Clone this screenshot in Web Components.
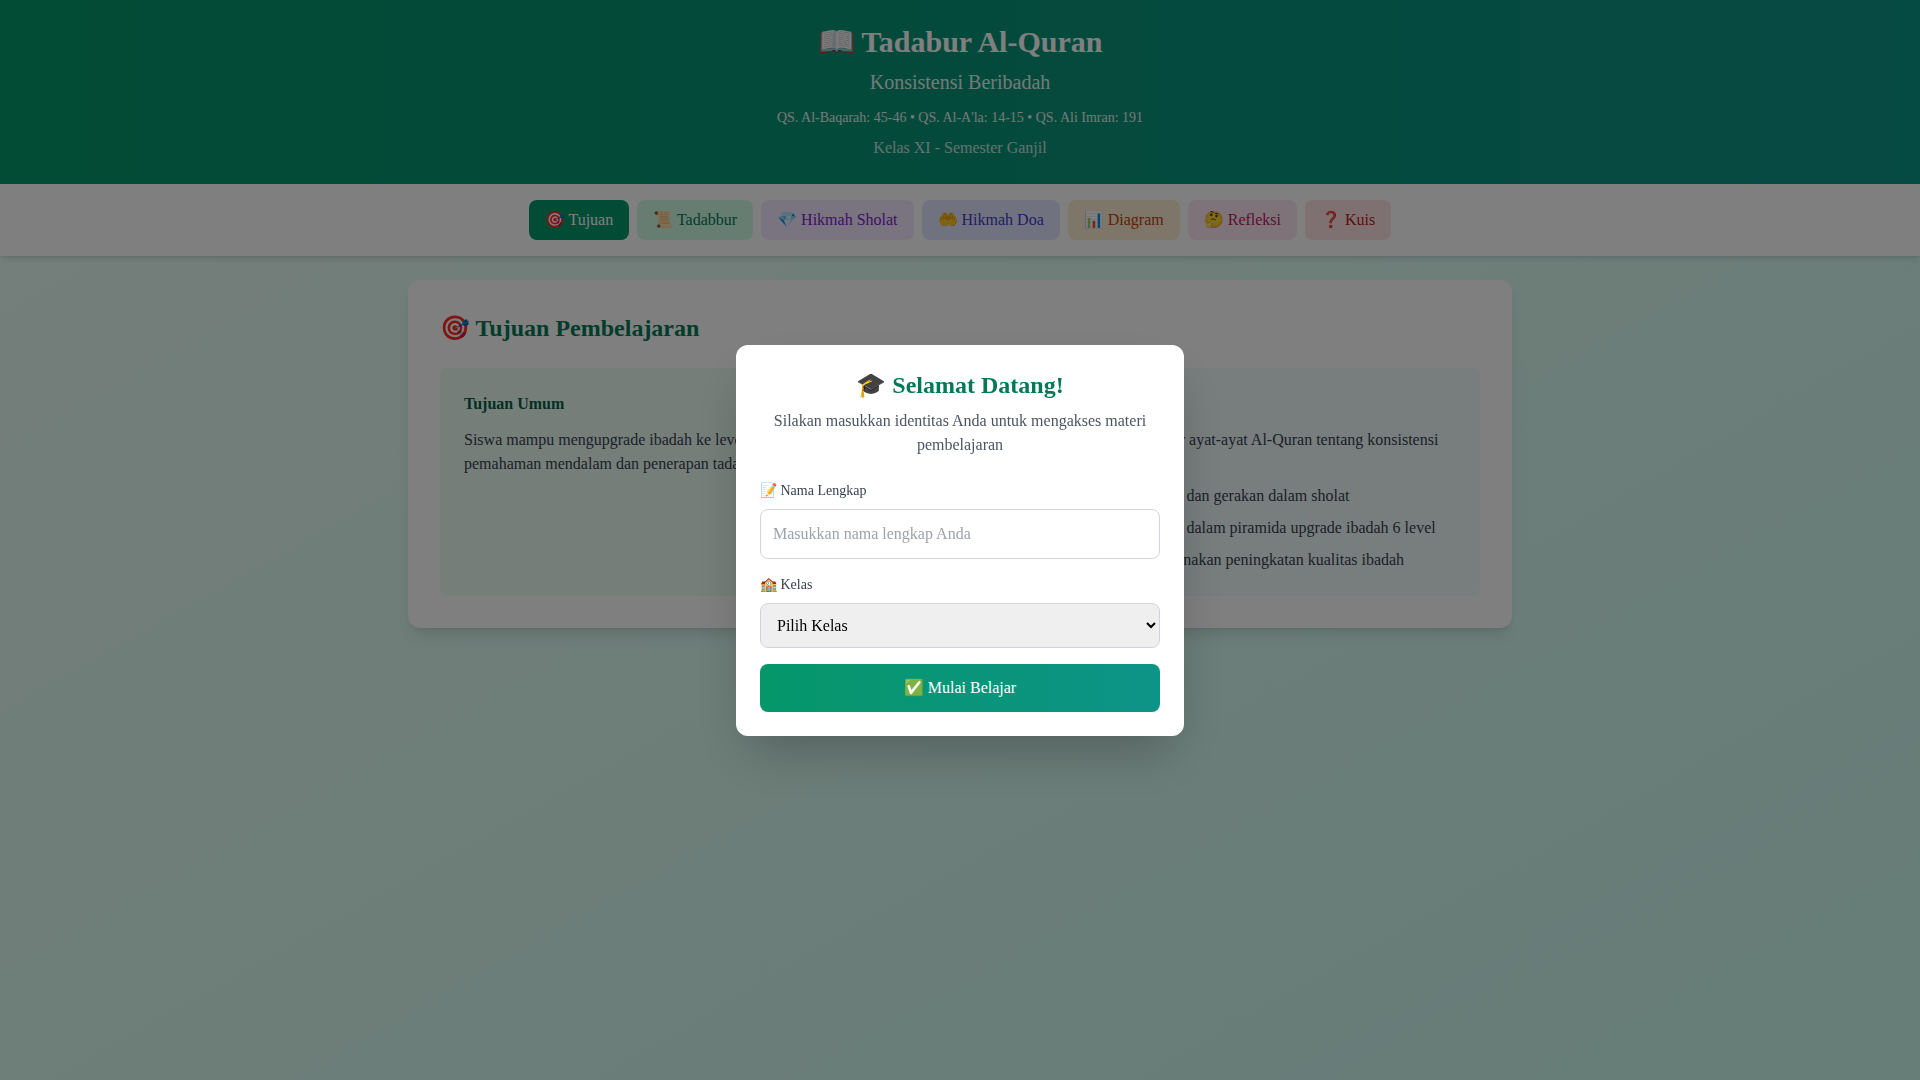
<!DOCTYPE html>
<html lang="id">
<head>
<meta charset="utf-8">
<meta name="viewport" content="width=device-width, initial-scale=1">
<title>Tadabur Al-Quran</title>
<style>
  body {
    margin: 0;
    min-height: 100vh;
    font: 16px/24px "Liberation Serif", serif;
    color: #000;
    background: linear-gradient(to bottom right, #ecfdf5, #ccfbf1);
  }
</style>
</head>
<body>
<tadabur-app></tadabur-app>

<template id="app-header">
  <style>
    :host { display: block; padding: 24px; text-align: center; color: #fff; background: linear-gradient(to right, #059669, #0d9488); }
    h1 { margin: 0 0 8px; font-size: 30px; line-height: 36px; }
    p { margin: 0; }
    .subtitle { font-size: 20px; line-height: 28px; opacity: .9; }
    .verses { margin: 12px 0 8px; font-size: 14px; line-height: 20px; opacity: .9; }
    .grade { opacity: .75; }
  </style>
  <h1>📖 Tadabur Al-Quran</h1>
  <p class="subtitle">Konsistensi Beribadah</p>
  <p class="verses">QS. Al-Baqarah: 45-46 • QS. Al-A'la: 14-15 • QS. Ali Imran: 191</p>
  <p class="grade">Kelas XI - Semester Ganjil</p>
</template>

<template id="nav-tab">
  <style>
    :host { display: block; }
    button { display: block; border: 0; border-radius: 8px; padding: 8px 16px; font: inherit; color: var(--tab-ink); background: var(--tab-fill); cursor: pointer; }
  </style>
  <button type="button"><slot></slot></button>
</template>

<template id="app-nav">
  <style>
    :host { display: block; position: relative; padding: 16px; background: #fff; box-shadow: 0 4px 6px -1px rgb(0 0 0 / .1), 0 2px 4px -2px rgb(0 0 0 / .1); }
    nav { display: flex; flex-wrap: wrap; justify-content: center; gap: 8px; }
    .active { --tab-fill: #059669; --tab-ink: #fff; }
    .green { --tab-fill: #d1fae5; --tab-ink: #047857; }
    .purple { --tab-fill: #f3e8ff; --tab-ink: #7e22ce; }
    .indigo { --tab-fill: #e0e7ff; --tab-ink: #4338ca; }
    .orange { --tab-fill: #ffedd5; --tab-ink: #c2410c; }
    .pink { --tab-fill: #fce7f3; --tab-ink: #be185d; }
    .red { --tab-fill: #fee2e2; --tab-ink: #b91c1c; }
  </style>
  <nav aria-label="Materi">
    <nav-tab class="active">🎯 Tujuan</nav-tab>
    <nav-tab class="green">📜 Tadabbur</nav-tab>
    <nav-tab class="purple">💎 Hikmah Sholat</nav-tab>
    <nav-tab class="indigo">🤲 Hikmah Doa</nav-tab>
    <nav-tab class="orange">📊 Diagram</nav-tab>
    <nav-tab class="pink">🤔 Refleksi</nav-tab>
    <nav-tab class="red">❓ Kuis</nav-tab>
  </nav>
</template>

<template id="goal-panel">
  <style>
    :host { display: block; padding: 24px; border-radius: 8px; color: #374151; background: var(--panel-fill); }
    h3 { margin: 0 0 12px; font-size: 16px; line-height: 24px; color: var(--panel-title); }
  </style>
  <h3><slot name="title"></slot></h3>
  <slot></slot>
</template>

<template id="goal-section">
  <style>
    :host { display: block; padding: 32px; border-radius: 12px; background: #fff; box-shadow: 0 10px 15px -3px rgb(0 0 0 / .1), 0 4px 6px -4px rgb(0 0 0 / .1); }
    h2 { margin: 0 0 24px; font-size: 24px; line-height: 32px; color: #047857; }
    .grid { display: grid; grid-template-columns: 1fr 1fr; gap: 24px; }
    .general { --panel-fill: #ecfdf5; --panel-title: #065f46; }
    .specific { --panel-fill: #f0fdfa; --panel-title: #115e59; }
    p { margin: 0; }
    ul { display: flex; flex-direction: column; gap: 8px; margin: 0; padding: 0; list-style: none; }
  </style>
  <h2>🎯 Tujuan Pembelajaran</h2>
  <div class="grid">
    <goal-panel class="general">
      <span slot="title">Tujuan Umum</span>
      <p>Siswa mampu mengupgrade ibadah ke level yang lebih tinggi melalui pemahaman mendalam dan penerapan tadabbur Al-Quran</p>
    </goal-panel>
    <goal-panel class="specific">
      <span slot="title">Tujuan Khusus</span>
      <ul>
        <li>• Memahami makna tadabbur ayat-ayat Al-Quran tentang konsistensi beribadah</li>
        <li>• Menjelaskan makna bacaan dan gerakan dalam sholat</li>
        <li>• Mengidentifikasi posisi diri dalam piramida upgrade ibadah 6 level</li>
        <li>• Merefleksikan dan merencanakan peningkatan kualitas ibadah</li>
      </ul>
    </goal-panel>
  </div>
</template>

<template id="login-dialog">
  <style>
    :host { position: fixed; inset: 0; z-index: 10; display: flex; align-items: center; justify-content: center; padding: 16px; background: rgb(0 0 0 / .5); }
    .card { box-sizing: border-box; width: 100%; max-width: 448px; padding: 24px; border-radius: 12px; background: #fff; box-shadow: 0 25px 50px -12px rgb(0 0 0 / .25); }
    header { margin-bottom: 24px; text-align: center; }
    h2 { margin: 0 0 8px; font-size: 24px; line-height: 32px; color: #047857; }
    p { margin: 0; color: #4b5563; }
    form { display: flex; flex-direction: column; gap: 16px; }
    label { display: block; margin-bottom: 8px; font-size: 14px; line-height: 20px; color: #374151; }
    input, select { display: block; box-sizing: border-box; width: 100%; margin: 0; padding: 12px; border: 1px solid #d1d5db; border-radius: 8px; font: inherit; color: #000; }
    input { background: #fff; }
    input::placeholder { color: #9ca3af; opacity: 1; }
    select { background-color: #efefef; }
    button { padding: 12px; border: 0; border-radius: 8px; font: inherit; color: #fff; background: linear-gradient(to right, #059669, #0d9488); cursor: pointer; }
  </style>
  <div class="card" role="dialog" aria-modal="true" aria-labelledby="welcome">
    <header>
      <h2 id="welcome">🎓 Selamat Datang!</h2>
      <p>Silakan masukkan identitas Anda untuk mengakses materi pembelajaran</p>
    </header>
    <form>
      <div>
        <label for="name">📝 Nama Lengkap</label>
        <input id="name" type="text" placeholder="Masukkan nama lengkap Anda">
      </div>
      <div>
        <label for="class">🏫 Kelas</label>
        <select id="class"><option>Pilih Kelas</option></select>
      </div>
      <button type="button">✅ Mulai Belajar</button>
    </form>
  </div>
</template>

<template id="tadabur-app">
  <style>
    :host { display: block; }
    main { box-sizing: border-box; max-width: 1152px; margin: 0 auto; padding: 24px; }
  </style>
  <app-header></app-header>
  <app-nav></app-nav>
  <main><goal-section></goal-section></main>
  <login-dialog></login-dialog>
</template>

<script>
  for (const name of ["app-header", "nav-tab", "app-nav", "goal-panel", "goal-section", "login-dialog", "tadabur-app"]) {
    customElements.define(name, class extends HTMLElement {
      constructor() {
        super();
        this.attachShadow({ mode: "open" }).append(document.getElementById(name).content.cloneNode(true));
      }
    });
  }
</script>
</body>
</html>
